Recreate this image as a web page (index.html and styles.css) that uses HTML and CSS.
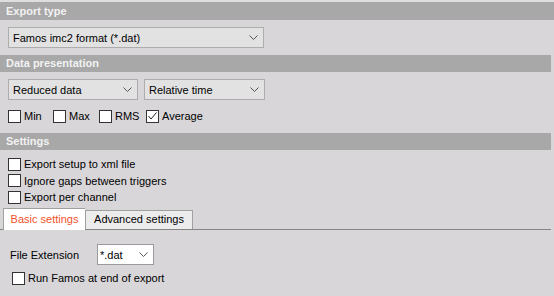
FILE: index.html
```html
<!DOCTYPE html>
<html lang="en">
<head>
  <meta charset="UTF-8">
  <title>Export</title>
  <link rel="stylesheet" href="styles.css">
</head>
<body>

  <div class="topline"></div>

  <div class="section-title full">Export type</div>
  <div class="section">
    <div class="select wide">
      <span>Famos imc2 format (*.dat)</span>
      <svg class="chev" width="9" height="5" viewBox="0 0 9 5"><path d="M0.5 0.5 L4.5 4.5 L8.5 0.5" fill="none" stroke="#555" stroke-width="1"/></svg>
    </div>
  </div>

  <div class="section-title">Data presentation</div>
  <div class="section presentation">
    <div class="row">
      <div class="select mid">
        <span>Reduced data</span>
        <svg class="chev" width="9" height="5" viewBox="0 0 9 5"><path d="M0.5 0.5 L4.5 4.5 L8.5 0.5" fill="none" stroke="#555" stroke-width="1"/></svg>
      </div>
      <div class="select mid2">
        <span>Relative time</span>
        <svg class="chev" width="9" height="5" viewBox="0 0 9 5"><path d="M0.5 0.5 L4.5 4.5 L8.5 0.5" fill="none" stroke="#555" stroke-width="1"/></svg>
      </div>
    </div>
    <div class="row checks">
      <label class="check w-min"><span class="box"></span>Min</label>
      <label class="check w-max"><span class="box"></span>Max</label>
      <label class="check w-rms"><span class="box"></span>RMS</label>
      <label class="check"><span class="box"><svg width="11" height="11" viewBox="0 0 11 11"><path d="M1.5 5 L4 8 L9.5 1.5" fill="none" stroke="#222" stroke-width="1"/></svg></span>Average</label>
    </div>
  </div>

  <div class="section-title">Settings</div>
  <div class="section list">
    <label class="check"><span class="box"></span>Export setup to xml file</label>
    <label class="check"><span class="box"></span>Ignore gaps between triggers</label>
    <label class="check"><span class="box"></span>Export per channel</label>
  </div>

  <div class="tabs">
    <div class="tab active">Basic settings</div>
    <div class="tab">Advanced settings</div>
  </div>

  <div class="tab-body">
    <div class="row field">
      <span class="field-label">File Extension</span>
      <div class="select small">
        <span>*.dat</span>
        <svg class="chev" width="9" height="5" viewBox="0 0 9 5"><path d="M0.5 0.5 L4.5 4.5 L8.5 0.5" fill="none" stroke="#555" stroke-width="1"/></svg>
      </div>
    </div>
    <label class="check run"><span class="box"></span>Run Famos at end of export</label>
  </div>

</body>
</html>
```

FILE: styles.css
```css
body {
  font-family: 'Liberation Sans', Arial, sans-serif;
  font-size: 11px;
  color: #000;
  background: #d8d6d9;
  margin: 0;
  padding: 0;
  width: 554px;
  height: 296px;
  overflow: hidden;
}

.topline {
  height: 2px;
  background: #dedede;
}

.section-title {
  height: 17px;
  line-height: 17px;
  background: #a8a8a8;
  color: #f2f2f2;
  font-weight: bold;
  font-size: 11px;
  padding-left: 6px;
  width: 545px;
}

.section-title.full {
  height: 18px;
  line-height: 18px;
  width: auto;
}

.section {
  padding: 7px 0 7px 8px;
}

.section.presentation {
  padding-bottom: 9px;
}

.row {
  display: flex;
  align-items: center;
}

.select {
  box-sizing: border-box;
  height: 21px;
  border: 1px solid #adadad;
  background: #e2e2e2;
  display: flex;
  align-items: center;
  justify-content: space-between;
  padding: 0 5px 0 4px;
}

.select.wide {
  width: 256px;
}

.select.mid {
  width: 130px;
  margin-right: 6px;
}

.select.mid2 {
  width: 121px;
}

.select.small {
  width: 57px;
  background: #fff;
  border-color: #9a9a9a;
  padding: 0 5px 0 2px;
}

.chev {
  display: block;
}

.checks {
  margin-top: 8px;
}

.check {
  display: flex;
  align-items: center;
  height: 16px;
}

.w-min {
  width: 45px;
}

.w-max {
  width: 46px;
}

.w-rms {
  width: 47px;
}

.box {
  box-sizing: border-box;
  width: 13px;
  height: 13px;
  border: 1px solid #333;
  background: #fff;
  margin-right: 3px;
  display: flex;
  align-items: center;
  justify-content: center;
}

.list {
  padding: 6px 0 2.5px 8px;
}

.list .check {
  height: 16.5px;
}

.tabs {
  display: flex;
  align-items: flex-end;
  padding-left: 3px;
  width: 548px;
  border-bottom: 1px solid #858585;
  height: 21px;
}

.tab {
  box-sizing: border-box;
  width: 108px;
  height: 19px;
  line-height: 17px;
  text-align: center;
  border: 1px solid #a0a0a0;
  border-bottom: none;
  background: #ececec;
}

.tab.active {
  width: 82px;
  height: 22px;
  line-height: 20px;
  margin-bottom: -1px;
  background: #fff;
  color: #f0522a;
  border-right: none;
}

.tab-body {
  padding: 14px 0 0 10px;
}

.field-label {
  width: 87px;
}

.run {
  margin-top: 5px;
  margin-left: 2px;
}
```
